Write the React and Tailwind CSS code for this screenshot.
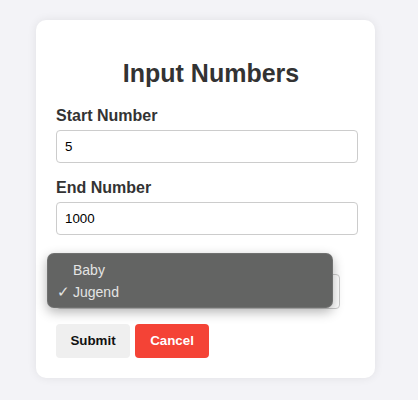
export default function App() {
  return (
    <div
      className="min-h-screen w-full bg-[#f3f3f7] pt-[20px] pl-[36px]"
      style={{ fontFamily: '"Liberation Sans", Arial, sans-serif' }}
    >
      <div className="relative w-[339px] rounded-[10px] bg-white pl-[20px] pr-[9px] pt-[20px] pb-[20px] shadow-[0_0_10px_rgba(0,0,0,0.08)]">
        <h2 className="mt-[19px] mb-[19px] text-center text-[25px] leading-[29px] font-bold text-[#333]">
          Input Numbers
        </h2>

        <label className="block text-[16px] leading-[18px] font-bold text-[#333] mb-[5px]">
          Start Number
        </label>
        <div className="mb-[16px] flex h-[33px] w-[302px] items-center rounded-[4px] border border-[#cccccc] px-[8px] text-[13.33px] text-black">
          5
        </div>

        <label className="block text-[16px] leading-[18px] font-bold text-[#333] mb-[5px]">
          End Number
        </label>
        <div className="mb-[16px] flex h-[33px] w-[302px] items-center rounded-[4px] border border-[#cccccc] px-[8px] text-[13.33px] text-black">
          1000
        </div>

        <label className="block text-[16px] leading-[18px] font-bold text-[#333] mb-[5px] pt-[3px]">
          Select Type
        </label>
        <div className="mb-[15px] mt-[-3px] flex h-[35px] w-[284px] items-center justify-between rounded-[4px] border border-[#cccccc] px-[8px] text-[13.33px] text-black">
          <span>Jugend</span>
          <svg width="8" height="6" viewBox="0 0 8 6" className="mr-[-2px]">
            <path d="M1 1.5 L4 4.5 L7 1.5" fill="none" stroke="#333" strokeWidth="1.4" />
          </svg>
        </div>

        <div className="flex gap-[5px]">
          <button className="h-[34px] w-[74px] rounded-[4px] bg-[#efefef] text-[13.33px] font-bold text-[#111]">
            Submit
          </button>
          <button className="h-[34px] w-[74px] rounded-[4px] bg-[#f44336] text-[13.33px] font-bold text-white">
            Cancel
          </button>
        </div>

        <div className="absolute left-[11px] top-[233px] w-[286px] h-[55px] rounded-[7px] border border-[#7a7a7a]/60 bg-[#636463] py-[5px] shadow-[0_4px_12px_rgba(0,0,0,0.3)] text-[14px] text-[#e4e4e4]">
          <div className="flex h-[22px] items-center pl-[25px]">Baby</div>
          <div className="relative flex h-[22px] items-center pl-[25px]">
            <span className="absolute left-[9px] text-[15px] leading-[22px]">✓</span>
            Jugend
          </div>
        </div>
      </div>
    </div>
  );
}
